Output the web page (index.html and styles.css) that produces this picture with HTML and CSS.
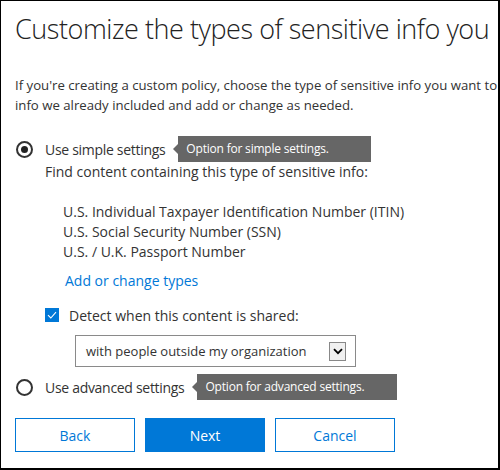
FILE: index.html
```html
<!DOCTYPE html>
<html>
<head>
<meta charset="utf-8">
<link rel="stylesheet" href="styles.css">
</head>
<body>
<div class="page">
  <h1 class="title">Customize the types of sensitive info you</h1>
  <p class="intro">If you're creating a custom policy, choose the type of sensitive info you want to<br>info we already included and add or change as needed.</p>

  <div class="option">
    <span class="radio checked"></span>
    <span class="label">Use simple settings</span>
    <span class="tip tip-simple">Option for simple settings.</span>
  </div>
  <div class="simple">
    <div class="find">Find content containing this type of sensitive info:</div>
    <ul class="types">
      <li>U.S. Individual Taxpayer Identification Number (ITIN)</li>
      <li>U.S. Social Security Number (SSN)</li>
      <li>U.S. / U.K. Passport Number</li>
    </ul>
    <a class="link">Add or change types</a>
    <div class="detect">
      <span class="check"><svg width="10" height="8" viewBox="0 0 10 8"><path d="M1 4.2 L3.8 7 L9 1.2" fill="none" stroke="#fff" stroke-width="1.1"/></svg></span>
      <span class="label">Detect when this content is shared:</span>
    </div>
    <div class="select">
      <span class="select-text">with people outside my organization</span>
      <span class="select-btn"><svg width="10" height="7" viewBox="0 0 10 7"><path d="M1 1.2 L5 5.2 L9 1.2" fill="none" stroke="#000" stroke-width="1.8"/></svg></span>
    </div>
  </div>

  <div class="option adv">
    <span class="radio"></span>
    <span class="label">Use advanced settings</span>
    <span class="tip tip-adv">Option for advanced settings.</span>
  </div>

  <div class="buttons">
    <button class="btn">Back</button>
    <button class="btn primary">Next</button>
    <button class="btn">Cancel</button>
  </div>
</div>
</body>
</html>
```

FILE: styles.css
```css
html, body {
  margin: 0;
  padding: 0;
  background: #fff;
}
.page {
  width: 500px;
  height: 470px;
  box-sizing: border-box;
  border-style: solid;
  border-color: #000;
  border-width: 1px 2px 2px 1px;
  overflow: hidden;
  padding-left: 14px;
  font-family: "Open Sans", "Liberation Sans", sans-serif;
  font-size: 13px;
  color: #333;
  white-space: nowrap;
}
.title {
  margin: 10px 0 0 0;
  font-weight: 300;
  font-size: 27px;
  line-height: 36px;
  color: #222;
  letter-spacing: -0.45px;
}
.intro {
  margin: 28px 0 0 0;
  line-height: 20px;
  font-size: 13.2px;
}
.option {
  display: flex;
  align-items: center;
  height: 26px;
  margin-top: 21px;
}
.radio {
  width: 13px;
  height: 13px;
  border: 2px solid #333;
  border-radius: 50%;
  box-sizing: content-box;
  margin-left: 1px;
  position: relative;
  flex: none;
}
.radio.checked::after {
  content: "";
  position: absolute;
  left: 3px;
  top: 3px;
  width: 7px;
  height: 7px;
  border-radius: 50%;
  background: #222;
}
.option .label {
  margin-left: 12px;
  font-size: 14px;
  letter-spacing: -0.3px;
}
.tip {
  position: relative;
  margin-left: 13px;
  background: #666;
  color: #fff;
  font-size: 12px;
  height: 26px;
  line-height: 26px;
  padding: 0 0 0 8px;
  box-sizing: border-box;
  letter-spacing: -0.2px;
}
.tip-simple {
  width: 193px;
}
.tip-adv {
  width: 200px;
}
.tip::before {
  content: "";
  position: absolute;
  left: -5px;
  top: 8px;
  border-style: solid;
  border-width: 5px 5px 5px 0;
  border-color: transparent #666 transparent transparent;
}
.simple {
  padding-left: 30px;
}
.find {
  line-height: 20px;
  font-size: 14px;
}
.types {
  list-style: none;
  margin: 20px 0 0 18px;
  padding: 0;
  line-height: 20px;
  font-size: 14px;
}
.link {
  display: block;
  margin: 9px 0 0 20px;
  color: #0078d7;
  font-size: 14px;
  line-height: 20px;
}
.detect {
  display: flex;
  align-items: center;
  margin-top: 14px;
  height: 20px;
}
.check {
  width: 14px;
  height: 14px;
  background: #0078d7;
  display: flex;
  align-items: center;
  justify-content: center;
  flex: none;
}
.detect .label {
  margin-left: 10px;
  font-size: 14px;
}
.select {
  display: flex;
  align-items: center;
  justify-content: space-between;
  width: 281px;
  height: 32px;
  box-sizing: border-box;
  border: 1px solid #8a8a8a;
  margin: 10px 0 0 30px;
  padding: 0 9px 0 10px;
}
.select-text {
  font-size: 13px;
  color: #333;
}
.select-btn {
  width: 17px;
  height: 19px;
  box-sizing: border-box;
  border: 1px solid #888;
  background: #f0f0f0;
  display: flex;
  align-items: center;
  justify-content: center;
}
.option.adv {
  margin-top: 7px;
}
.buttons {
  display: flex;
  gap: 10px;
  margin-top: 18px;
}
.btn {
  width: 120px;
  height: 34px;
  box-sizing: border-box;
  border: 1px solid #0078d7;
  background: #fff;
  color: #0078d7;
  font-family: inherit;
  font-size: 14px;
  padding: 0;
}
.btn.primary {
  background: #0078d7;
  color: #fff;
}
```
